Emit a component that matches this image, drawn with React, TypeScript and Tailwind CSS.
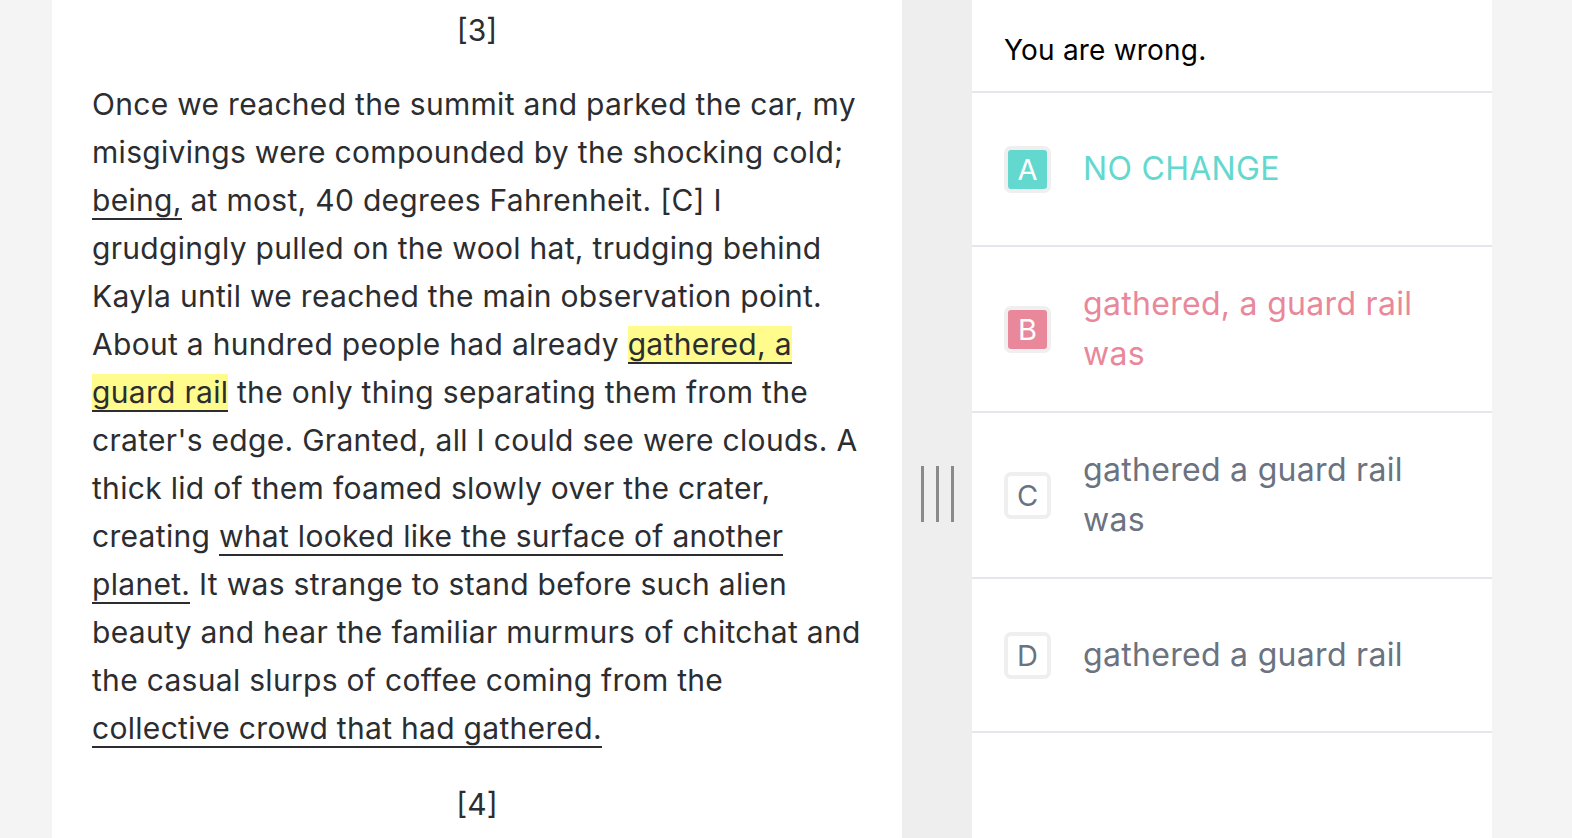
import React from 'react'

type Choice = {
  letter: string
  text: string
  state: 'correct' | 'wrong' | 'idle'
}

const choices: Choice[] = [
  { letter: 'A', text: 'NO CHANGE', state: 'correct' },
  { letter: 'B', text: 'gathered, a guard rail was', state: 'wrong' },
  { letter: 'C', text: 'gathered a guard rail was', state: 'idle' },
  { letter: 'D', text: 'gathered a guard rail', state: 'idle' },
]

function Underlined({ children, highlight = false }: { children: React.ReactNode; highlight?: boolean }) {
  return (
    <span className={`border-b-2 border-[#2b2d31] ${highlight ? 'bg-[#fffb8c]' : ''}`}>{children}</span>
  )
}

function ChoiceRow({ choice }: { choice: Choice }) {
  const badge =
    choice.state === 'correct'
      ? 'bg-[#63d8ce] text-white'
      : choice.state === 'wrong'
        ? 'bg-[#e8889a] text-white'
        : 'bg-white text-[#6b7280]'
  const text =
    choice.state === 'correct'
      ? 'text-[#63d8ce]'
      : choice.state === 'wrong'
        ? 'text-[#e8889a]'
        : 'text-[#6b7280]'

  return (
    <div className="flex min-h-[154px] items-center gap-8 border-b-2 border-[#e3e6ea] px-8 py-8">
      <div
        className={`flex h-[47px] w-[47px] shrink-0 items-center justify-center rounded-[7px] border-[4px] border-[#efefef] text-[29px] leading-none ${badge}`}
      >
        {choice.letter}
      </div>
      <div className={`text-[32px] leading-[50px] tracking-[0.3px] ${text}`}>{choice.text}</div>
    </div>
  )
}

export default function App() {
  return (
    <div className="flex h-screen overflow-hidden bg-[#f4f4f4] font-['Inter','Noto_Sans',sans-serif]">
      {/* passage */}
      <div className="ml-[52px] w-[850px] shrink-0 bg-white px-10 pt-[6px] text-[#2b2d31]">
        <div className="text-center text-[30px] leading-[48px]">[3]</div>
        <p className="mt-[26px] text-[30px] leading-[48px] tracking-[0.3px]">
          Once we reached the summit and parked the car, my misgivings were compounded by the shocking cold;{' '}
          <Underlined>being,</Underlined> at most, 40 degrees Fahrenheit. [C] I grudgingly pulled on the wool hat,
          trudging behind Kayla until we reached the main observation point. About a hundred people had already{' '}
          <Underlined highlight>gathered, a guard rail</Underlined> the only thing separating them from the crater's
          edge. Granted, all I could see were clouds. A thick lid of them foamed slowly over the crater, creating{' '}
          <Underlined>what looked like the surface of another planet.</Underlined> It was strange to stand before such
          alien beauty and hear the familiar murmurs of chitchat and the casual slurps of coffee coming from the{' '}
          <Underlined>collective crowd that had gathered.</Underlined>
        </p>
        <div className="mt-[28px] text-center text-[30px] leading-[48px]">[4]</div>
      </div>

      {/* resize handle */}
      <div className="flex w-[70px] shrink-0 justify-center gap-[12px] bg-[#eeeeee] pt-[466px]">
        <div className="h-[56px] w-[3px] bg-[#8a8a8a]" />
        <div className="h-[56px] w-[3px] bg-[#8a8a8a]" />
        <div className="h-[56px] w-[3px] bg-[#8a8a8a]" />
      </div>

      {/* question */}
      <div className="w-[520px] shrink-0 bg-white">
        <div className="flex h-[93px] items-center border-b-2 border-[#e3e6ea] px-8 pt-[8px] text-[28px] tracking-[0.2px] text-black">
          You are wrong.
        </div>
        {choices.map(c => (
          <ChoiceRow key={c.letter} choice={c} />
        ))}
      </div>
    </div>
  )
}
